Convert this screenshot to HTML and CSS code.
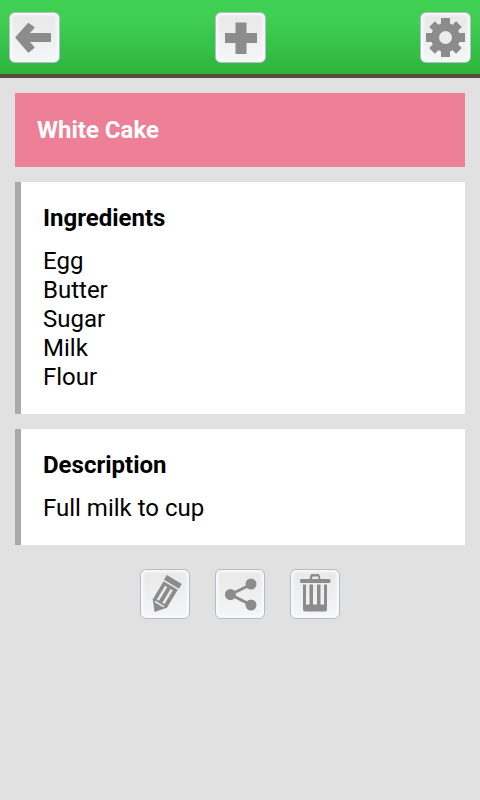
FILE: index.html
```html
<!DOCTYPE html>
<html lang="en">
<head>
<meta charset="utf-8">
<meta name="viewport" content="width=device-width, initial-scale=1">
<title>White Cake</title>
<link rel="stylesheet" href="styles.css">
</head>
<body>
<header class="bar">
  <button class="btn" type="button" aria-label="Back">
    <svg viewBox="0 0 51 51"><path class="round" d="M7.500 25.500 19.500 12 24.500 15.500 18.500 22H41v7H18.500L24.500 35.500 19.500 39.500Z"/></svg>
  </button>
  <button class="btn" type="button" aria-label="Add recipe">
    <svg viewBox="0 0 51 51"><path d="M20.500 10.500H31.500V21H42V31H31.500V42H20.500V31H10V21H20.500Z"/></svg>
  </button>
  <button class="btn" type="button" aria-label="Settings">
    <svg viewBox="0 0 51 51">
      <circle cx="25.500" cy="25.500" r="14.500"/>
      <path d="M21 6H30V45H21ZM6 21H45V30H6Z"/>
      <path d="M21.500 6.500H29.500V44.500H21.500ZM6.500 21.500H44.500V29.500H6.500Z" transform="rotate(45 25.500 25.500)"/>
      <circle class="cut" cx="25.500" cy="25.500" r="6.500"/>
    </svg>
  </button>
</header>
<main class="content">
  <h1 class="title">White Cake</h1>
  <section class="card">
    <h2 class="card-heading">Ingredients</h2>
    <ul class="card-text">
      <li>Egg</li>
      <li>Butter</li>
      <li>Sugar</li>
      <li>Milk</li>
      <li>Flour</li>
    </ul>
  </section>
  <section class="card">
    <h2 class="card-heading">Description</h2>
    <p class="card-text">Full milk to cup</p>
  </section>
  <div class="actions">
    <button class="btn" type="button" aria-label="Edit">
      <svg viewBox="0 0 51 51">
        <g transform="translate(14.500 43) rotate(31)">
          <path d="M0 0-8-10V-31H8.500V-10Z"/>
          <path d="M-8.500-38H9V-32.500H-8.500Z"/>
          <path class="cut" d="M-4.500-28H-2V-12H-4.500ZM2-28H4.500V-12H2ZM-5.500-10H6L4.500-8.500H-4.500Z"/>
        </g>
      </svg>
    </button>
    <button class="btn" type="button" aria-label="Share">
      <svg viewBox="0 0 51 51">
        <path class="line" d="M36 15.500 15.500 25.500 36 36"/>
        <circle cx="15.500" cy="25.500" r="5.500"/><circle cx="36" cy="15" r="5.500"/><circle cx="36" cy="36" r="5.500"/>
      </svg>
    </button>
    <button class="btn" type="button" aria-label="Delete">
      <svg viewBox="0 0 51 51">
        <path d="M11 10H19.500L20.500 6Q21 5 22 5H28Q29 5 29.500 6L30.500 10H39.500Q40.500 10 40.500 12T39.500 14H11Q10 14 10 12T11 10ZM22 10H28.500L28 7.500H22.500Z" fill-rule="evenodd"/>
        <path d="M13 15.500H37V40.500Q37 42.500 35 42.500H15Q13 42.500 13 40.500ZM16 15.500V35.500H19.500V15.500ZM23 15.500V35.500H27V15.500ZM30.500 15.500V35.500H34V15.500Z" fill-rule="evenodd"/>
      </svg>
    </button>
  </div>
</main>
</body>
</html>
```
FILE: styles.css
```css
* {
  box-sizing: border-box;
}

body {
  margin: 0;
  min-height: 100vh;
  background: #e1e1e1;
  color: #000;
  font: 24px/28px Roboto, "Liberation Sans", sans-serif;
}

.bar {
  display: flex;
  justify-content: space-between;
  padding: 12px 9px 11px;
  background: linear-gradient(#3fd052, #40cf53 25%, #2db43e);
  border-bottom: 4px solid #584b3b;
}

.btn {
  width: 51px;
  height: 51px;
  padding: 0;
  border: 1px solid #b4bec8;
  border-radius: 6px;
  background: linear-gradient(#e8e8e8, #f5f6f9);
  box-shadow: inset 0 0 3px 2px #fafbfc;
  cursor: pointer;
}

.btn svg {
  display: block;
  width: 51px;
  height: 51px;
  margin: -1px;
  fill: #8c8c8c;
}

.btn .cut {
  fill: #ececee;
}

.btn .round {
  stroke: #8c8c8c;
  stroke-width: 2;
  stroke-linejoin: round;
}

.btn .line {
  fill: none;
  stroke: #8c8c8c;
  stroke-width: 3;
}

.content {
  display: flex;
  flex-direction: column;
  gap: 15px;
  padding: 15px;
}

.title {
  margin: 0;
  padding: 23px 22px;
  background: #ed7f96;
  color: #fff;
  font-size: 24px;
  font-weight: 700;
}

.card {
  padding: 22px;
  border-left: 6px solid #a9a9a9;
  background: #fff;
}

.card-heading {
  margin: 0 0 15px;
  font-size: 24px;
  font-weight: 700;
}

.card-text {
  margin: 0;
  padding: 0;
  list-style: none;
  line-height: 29px;
}

.actions {
  display: flex;
  justify-content: center;
  gap: 24px;
  padding-top: 9px;
}

.actions .btn {
  width: 50px;
  height: 50px;
}

.actions {
  gap: 25px;
}
```
